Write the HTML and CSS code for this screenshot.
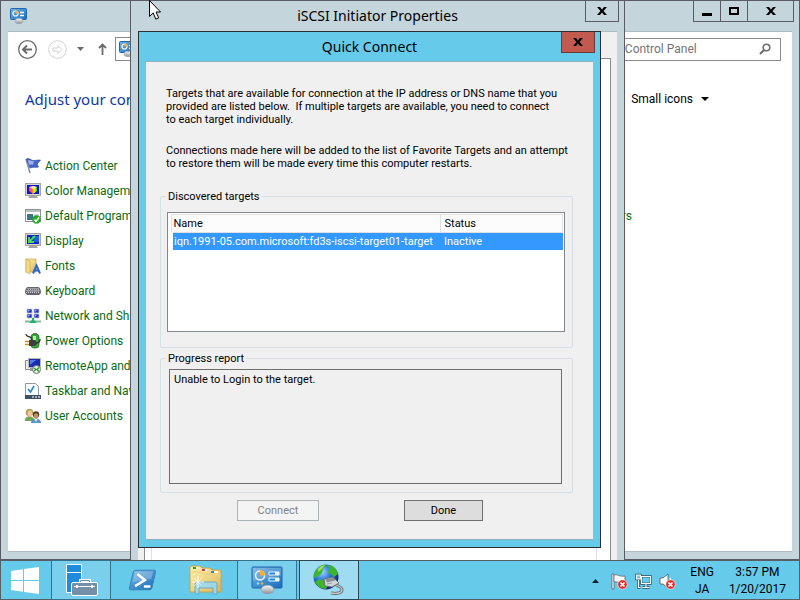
FILE: index.html
```html
<!DOCTYPE html>
<html lang="en">
<head>
<meta charset="utf-8">
<title>Quick Connect</title>
<link rel="stylesheet" href="styles.css">
</head>
<body>
<svg class="defs" aria-hidden="true">
  <defs>
    <linearGradient id="gBlue" x1="0" y1="0" x2="1" y2="1"><stop offset="0" stop-color="#6db4e8"/><stop offset="1" stop-color="#1b6db8"/></linearGradient>
    <linearGradient id="gGrey" x1="0" y1="0" x2="0" y2="1"><stop offset="0" stop-color="#fafafa"/><stop offset="1" stop-color="#8d9299"/></linearGradient>
    <linearGradient id="gFolder" x1="0" y1="0" x2="1" y2="1"><stop offset="0" stop-color="#fdf3b4"/><stop offset="1" stop-color="#dfb758"/></linearGradient>
    <linearGradient id="gRainbow" x1="0" y1="0" x2="1" y2="0"><stop offset="0" stop-color="#ff2fd0"/><stop offset=".35" stop-color="#ff5a2a"/><stop offset=".65" stop-color="#ffee20"/><stop offset="1" stop-color="#18d838"/></linearGradient>
    <radialGradient id="gGlobe" cx=".35" cy=".3" r=".75"><stop offset="0" stop-color="#9fd4ff"/><stop offset=".45" stop-color="#2a78e0"/><stop offset="1" stop-color="#0b2078"/></radialGradient>
    <symbol id="panel" viewBox="0 0 32 28">
      <rect x="1" y="1" width="30" height="21" rx="1" fill="url(#gBlue)" stroke="#1f65a8"/>
      <path d="M2 2h28v8L2 15z" fill="#fff" opacity=".14"/>
      <circle cx="9" cy="9.500" r="4.500" fill="none" stroke="#e8f4ff" stroke-width="1.500"/>
      <path d="M9 9.500V3.500a6 6 0 0 1 5 6z" fill="#ffad33"/>
      <path d="M18 6h10v3H18zM18 12h10v3H18z" fill="#2784d8" stroke="#e8f4ff"/>
      <path d="M24 6h4v3h-4zM24 12h4v3h-4z" fill="#e8f4ff"/>
      <circle cx="7" cy="17.500" r="1.300" fill="#8fe0ff"/><circle cx="11" cy="17.500" r="1.300" fill="#ffad33"/>
      <ellipse cx="16.500" cy="23.500" rx="6.500" ry="4.300" fill="url(#gGrey)" stroke="#8b9096" stroke-width=".5"/>
    </symbol>
    <symbol id="panel-s" viewBox="0 0 17 16">
      <rect x=".5" y=".5" width="16" height="11" rx="1" fill="url(#gBlue)" stroke="#2466a6"/>
      <circle cx="5.500" cy="5.500" r="2.500" fill="none" stroke="#fff" stroke-width="1.200"/>
      <path d="M5.500 5.500V2.500a3 3 0 0 1 3 3z" fill="#ffad33"/>
      <path d="M10 4.500h4M10 7.500h4" stroke="#fff" stroke-width="1.300"/>
      <ellipse cx="9" cy="13" rx="4" ry="2.700" fill="url(#gGrey)" stroke="#999ea4" stroke-width=".5"/>
    </symbol>
  </defs>
</svg>

<div class="screen">
  <main class="desktop">

    <section class="window cpanel" aria-label="Control Panel">
      <header class="titlebar">
        <svg class="title-icon" width="17" height="16"><use href="#panel-s"/></svg>
        <div class="caption-buttons">
          <button class="cap" aria-label="Minimize"><svg width="12" height="10" viewBox="0 0 12 10"><path d="M1 7h10v3H1z"/></svg></button>
          <button class="cap" aria-label="Maximize"><svg width="12" height="10" viewBox="0 0 12 10"><path d="M1 1h10v8H1zM3 3v4h6V3z" fill-rule="evenodd"/></svg></button>
          <button class="cap cap-wide" aria-label="Close"><svg width="10" height="8" viewBox="0 0 10 8"><path d="M0 0h3l2 2.500L7 0h3L6.500 4 10 8H7L5 5.500 3 8H0l3.500-4z"/></svg></button>
        </div>
      </header>
      <div class="cp-body">
        <nav class="cp-nav" aria-label="Navigation">
          <button class="nav-btn" aria-label="Back"><svg width="19" height="19" viewBox="0 0 19 19" fill="none" stroke="#6a6a6a"><circle cx="9.500" cy="9.500" r="8.800" stroke-width="1.300"/><path d="M5 9.500h9M9 5.500l-4 4 4 4" stroke-width="2"/></svg></button>
          <button class="nav-btn nav-fwd" aria-label="Forward" disabled><svg width="19" height="19" viewBox="0 0 19 19" fill="none" stroke="#d2d2d2"><circle cx="9.500" cy="9.500" r="8.800"/><path d="M5 8h5V5.500l4 4-4 4V11H5z"/></svg></button>
          <button class="nav-btn nav-drop" aria-label="Recent locations"><svg width="7" height="4" viewBox="0 0 7 4"><path d="M0 0h7L3.500 4z" fill="#6a6a6a"/></svg></button>
          <button class="nav-btn nav-up" aria-label="Up"><svg width="9" height="12" viewBox="0 0 9 12" fill="none" stroke="#6a6a6a" stroke-width="1.800"><path d="M4.500 12V1.500M1 5l3.500-3.500L8 5"/></svg></button>
          <div class="address"><svg width="17" height="16"><use href="#panel-s"/></svg></div>
          <label class="search">
            <input type="search" placeholder="Search Control Panel" aria-label="Search Control Panel">
            <svg width="12" height="12" viewBox="0 0 12 12" fill="none" stroke="#6d6d6d"><circle cx="7.500" cy="4.500" r="3.300" stroke-width="1.600"/><path d="M5 7L1 11" stroke-width="2.200"/></svg>
          </label>
        </nav>
        <div class="cp-head">
          <h1>Adjust your computer's settings</h1>
          <button class="view-by">Small icons <svg width="8" height="4" viewBox="0 0 8 4"><path d="M0 0h8L4 4z"/></svg></button>
        </div>
        <div class="cp-columns">
          <ul class="cp-list">
            <li><a href="#"><svg width="16" height="16" viewBox="0 0 16 16"><path d="M1 1l4 14" stroke="#7f8cae" stroke-width="1.500"/><path d="M1.500 1c3-1.500 4 1.500 7 1.500s4-.5 7-.5l-3.500 4 1.500 3c-3 1-5-.5-8.500 1z" fill="#4666c8" stroke="#324d9c" stroke-width=".7"/><path d="M3 2.500c3-1 4 1 6 1l-1 3-4 0z" fill="#9db4f0"/></svg>Action Center</a></li>
            <li><a href="#"><svg width="16" height="16" viewBox="0 0 16 16"><path d="M5 12h6l2 3H3z" fill="#a2a2a2"/><rect x=".5" y=".5" width="15" height="12" fill="#d5d5d0" stroke="#a5a5a0"/><rect x="2" y="2" width="12" height="9" fill="#1117c8"/><path d="M4 4l4-1 4 1v4l-4 3-4-3z" fill="url(#gRainbow)"/><path d="M4 4l4-1 4 1-4 2z" fill="#fff" opacity=".7"/></svg>Color Management</a></li>
            <li><a href="#"><svg width="16" height="16" viewBox="0 0 16 16"><rect x=".5" y="1.500" width="15" height="12" fill="#fbfbfb" stroke="#8e9396"/><path d="M1 2h14v2H1z" fill="#b8bec2"/><path d="M2 6h6v6H2z" fill="#3a7588"/><path d="M9 7h5M9 9h4" stroke="#a8b0b4"/><circle cx="11.500" cy="11.500" r="4.300" fill="#28a828"/><path d="M9.500 11.500l1.500 2 3-4" fill="none" stroke="#fff" stroke-width="1.400"/></svg>Default Programs</a></li>
            <li><a href="#"><svg width="16" height="16" viewBox="0 0 16 16"><path d="M5 12h6l2 3H3z" fill="#a2a2a2"/><rect x=".5" y=".5" width="15" height="12" fill="#d5d5d0" stroke="#a5a5a0"/><rect x="2" y="2" width="12" height="9" fill="#1524c0"/><path d="M7 4h7M9 6h5M9 8h5" stroke="#2fa0f0"/><path d="M10 3L5 8m-1-4v5h5" fill="none" stroke="#42e052" stroke-width="1.900"/></svg>Display</a></li>
            <li><a href="#"><svg width="16" height="16" viewBox="0 0 16 16"><path d="M1 1h10v13H1z" fill="url(#gFolder)" stroke="#d0a848" stroke-width=".7"/><path d="M1 1l4 2v13l-4-2z" fill="#f5dc8a" stroke="#c99d3b" stroke-width=".6"/><path d="M8 15.500l3.500-8 3.500 8M9 12.500h5" fill="none" stroke="#2a6ad0" stroke-width="2"/></svg>Fonts</a></li>
            <li><a href="#"><svg width="16" height="16" viewBox="0 0 16 16"><path d="M3 4h10c2 0 3 3 3 6l-2 2H2l-2-2c0-3 1-6 3-6z" fill="#65656f"/><path d="M2.500 5.500h11M1.500 7.500h13M1 9.500h14" stroke="#d4d4dc" stroke-dasharray="1 1"/><path d="M1.500 8.500h13M2 6.500h12" stroke="#b4b4be" stroke-dasharray="1 1" stroke-dashoffset="1"/></svg>Keyboard</a></li>
            <li><a href="#"><svg width="16" height="16" viewBox="0 0 16 16"><path d="M2 1h5v4H2zM9 1h5v4H9zM2 6h5v4H2zM9 6h5v4H9z" fill="#2434bd" stroke="#bcc3dc" stroke-width=".8"/><path d="M3 2l2 0-2 2zM10 2h2l-2 2zM3 7h2l-2 2zM10 7h2l-2 2z" fill="#8ca4ff"/><path d="M0 13.500h16" stroke="#8db4a0" stroke-width="2"/><path d="M7 10h2v2l3 3H4l3-3z" fill="#20b070"/></svg>Network and Sharing Center</a></li>
            <li><a href="#"><svg width="16" height="16" viewBox="0 0 16 16"><rect x="6" y="1" width="8" height="14" rx="3" fill="#39a83e" stroke="#1d6425" stroke-width=".7"/><path d="M8 1h4V0H8z" fill="#777"/><path d="M8 3h3v4H8z" fill="#b6efae"/><path d="M1 1c0 4 6 1 6 6" fill="none" stroke="#333" stroke-width="1.200"/><path d="M4 7h5c3 0 4 6 0 6H4z" fill="#3e3e3e"/><path d="M0 8.500h4M0 11.500h4" stroke="#c9902a" stroke-width="1.300"/><path d="M11 10c3 0 4-2 4-4" fill="none" stroke="#333" stroke-width="1.400"/></svg>Power Options</a></li>
            <li><a href="#"><svg width="16" height="16" viewBox="0 0 16 16"><path d="M.5 2.500h5v9h-5z" fill="#f0f0f0" stroke="#8a8a8a"/><rect x="3.500" y=".5" width="12" height="9" fill="#1a2bb4" stroke="#b8b8b8"/><path d="M5 2h6L5 7z" fill="#5a78ee"/><path d="M5 10h6v3H5z" fill="#9a9a9a"/><circle cx="11.500" cy="11.500" r="4" fill="#e4eee4" stroke="#777"/><path d="M9 10l2 1.500L9 13M14 9.500L12 11.500l2 2" fill="none" stroke="#27922f" stroke-width="1.200"/></svg>RemoteApp and Desktop Connections</a></li>
            <li><a href="#"><svg width="16" height="16" viewBox="0 0 16 16"><path d="M.5.500h10l3 3v9H.5z" fill="#fafcff" stroke="#8f979f"/><path d="M3 6l2.500 3L9 3" fill="none" stroke="#2788d8" stroke-width="1.600"/><path d="M0 12h16v4H0z" fill="#3f5063"/><path d="M7 14h2M10 14h2M13 14h2" stroke="#c3ccd6" stroke-width="1.500"/></svg>Taskbar and Navigation</a></li>
            <li><a href="#"><svg width="16" height="16" viewBox="0 0 16 16"><path d="M0 12c0-5 9-5 9 0v1H0z" fill="#73a653"/><circle cx="4.500" cy="4.500" r="3.800" fill="#b8a060"/><ellipse cx="5" cy="5.500" rx="2.400" ry="3" fill="#f0c898"/><path d="M6 15c0-6 10-6 10 0z" fill="#5c94c8"/><path d="M9.500 11l1.500 3 1.500-3z" fill="#fff"/><circle cx="11" cy="6.500" r="3.200" fill="#4e3b30"/><ellipse cx="11" cy="8" rx="2.200" ry="2.700" fill="#c98e5c"/></svg>User Accounts</a></li>
          </ul>
          <ul class="cp-list cp-list-right">
            <li><a href="#">Devices and Printers</a></li>
            <li><a href="#">Phone and Modem</a></li>
          </ul>
        </div>
      </div>
    </section>

    <section class="window props" aria-label="iSCSI Initiator Properties">
      <header class="titlebar">
        <h2>iSCSI Initiator Properties</h2>
        <button class="cap cap-close" aria-label="Close"><svg width="10" height="8" viewBox="0 0 10 8"><path d="M0 0h3l2 2.500L7 0h3L6.500 4 10 8H7L5 5.500 3 8H0l3.500-4z"/></svg></button>
      </header>
      <div class="props-body"><div class="tab-page"><div class="tab-group"></div></div></div>
    </section>

    <section class="window quick" role="dialog" aria-labelledby="quick-title">
      <header class="titlebar">
        <h2 id="quick-title">Quick Connect</h2>
        <button class="cap cap-red" aria-label="Close"><svg width="10" height="8" viewBox="0 0 10 8"><path d="M0 0h3l2 2.500L7 0h3L6.500 4 10 8H7L5 5.500 3 8H0l3.500-4z"/></svg></button>
      </header>
      <form class="quick-body">
        <p>Targets that are available for connection at the IP address or DNS name that you<br>provided are listed below.&nbsp; If multiple targets are available, you need to connect<br>to each target individually.</p>
        <p>Connections made here will be added to the list of Favorite Targets and an attempt<br>to restore them will be made every time this computer restarts.</p>
        <fieldset>
          <legend>Discovered targets</legend>
          <div class="list-view">
            <table>
              <thead><tr><th class="col-name">Name</th><th>Status</th></tr></thead>
              <tbody><tr><td>iqn.1991-05.com.microsoft:fd3s-iscsi-target01-target</td><td>Inactive</td></tr></tbody>
            </table>
          </div>
        </fieldset>
        <fieldset>
          <legend id="report-label">Progress report</legend>
          <textarea readonly aria-labelledby="report-label">Unable to Login to the target.</textarea>
        </fieldset>
        <div class="actions">
          <button type="button" class="btn btn-connect" disabled>Connect</button>
          <button type="button" class="btn">Done</button>
        </div>
      </form>
    </section>

    <svg class="cursor" width="12" height="21" viewBox="0 0 12 21"><path d="M.5.500v16l3.700-3.600 2.600 6.200 2.900-1.200L7 12h4.500z" fill="#fff" stroke="#000"/></svg>
  </main>

  <footer class="taskbar">
    <button class="start" aria-label="Start"><svg width="28" height="27" viewBox="0 0 28 27" fill="#fff"><path d="M0 4l12-1.700V13H0zM13 2.100L28 0v13H13zM0 14h12v10.700L0 23zM13 14h15v13l-15-2.100z"/></svg></button>
    <div class="tasks">
      <button class="task task-open" aria-label="Server Manager"><svg width="33" height="33" viewBox="0 0 33 33"><path d="M1.500.500h15v28h-15z" fill="#1e8bdc" stroke="#fff"/><path d="M1.500 8.500h15" stroke="#fff"/><path d="M15.500 19v-2.500h9V19" fill="none" stroke="#fff" stroke-width="3"/><path d="M15.500 19v-2.500h9V19" fill="none" stroke="#71889b"/><rect x="6.500" y="18.500" width="26" height="13" rx="1.500" fill="#748fa6" stroke="#fff"/><path d="M9 22.500h21" stroke="#fff"/><path d="M11 21h2v3h-2zM26 21h2v3h-2z" fill="#fff"/></svg></button>
      <button class="task" aria-label="Windows PowerShell"><svg width="28" height="23" viewBox="0 0 30 24"><path d="M7 1h20q2 0 1.500 2l-4 17q-.5 2-2.500 2H2q-2 0-1.500-2l4-17Q5 1 7 1z" fill="url(#gBlue)" stroke="#3a7fb5"/><path d="M6 2h20l-2 8L4 14z" fill="#fff" opacity=".25"/><path d="M9 5l8 6.500L6.500 18M16 18.500h7" fill="none" stroke="#fff" stroke-width="2.600"/></svg></button>
      <button class="task" aria-label="File Explorer"><svg width="33" height="30" viewBox="0 0 33 30"><path d="M1 26V3q0-2 2-2h8l2 2h8l2 2h8q1 0 1 2v20H1z" fill="url(#gFolder)" stroke="#c6a14a"/><path d="M4 2h5v2H4zM13 4h5v2h-5zM22 6h7v2h-7z" fill="#fff"/><path d="M4 2h3v2H4z" fill="#0ab515"/><path d="M13 4h3v2h-3z" fill="#d63a30"/><path d="M22 6h3v2h-3z" fill="#2a8ce0"/><path d="M1 7h11l2 2h9l2 2h7" fill="none" stroke="#ecd07c"/><path d="M6 29V19q0-2 2-2h18q2 0 2 2v10h-4v-6H10v6z" fill="#9dd8ee" stroke="#60a8c8" opacity=".92"/><path d="M9 11v12M3 17h12" stroke="#fff" stroke-width=".9"/><path d="M5 13l8 8M13 13l-8 8" stroke="#fff" stroke-width=".6"/></svg></button>
      <button class="task task-open" aria-label="Control Panel"><svg width="32" height="28"><use href="#panel"/></svg></button>
      <button class="task task-active" aria-label="iSCSI Initiator"><svg width="32" height="32" viewBox="0 0 32 32"><circle cx="13" cy="13" r="12.500" fill="url(#gGlobe)"/><path d="M3 6c4-5 8-6 10-5l-3 4-1 4-4 3-4 2c0-3 0-6 2-8zM15 1c5 0 9 4 10 9l-4 3-3-3-3-1 1-4zM6 15l6 2 3 4-2 4c-5 0-9-3-11-7z" fill="#3fb52c"/><path d="M5 5c3-3 5-4 7-4L9 5 5 8z" fill="#b5ea6a" opacity=".8"/><path d="M22 20c3 2 7 3 7 6s-5 4-11 3" fill="none" stroke="#5f666c" stroke-width="3"/><path d="M22 20c3 2 7 3 7 6s-5 4-11 3" fill="none" stroke="#c5ccd1" stroke-width="1.300"/><path d="M11 15l9-2 6 6-7 4-7-1z" fill="#d3d6d9" stroke="#5d6267" stroke-width=".8"/><path d="M13 15.500l7-1.500 2 2-8 2zM14 20l5-1" fill="#8d949a" stroke="#777" stroke-width=".6"/></svg></button>
    </div>
    <div class="tray">
      <button class="tray-btn" aria-label="Show hidden icons"><svg width="7" height="4" viewBox="0 0 7 4"><path d="M0 4h7L3.500 0z" fill="#122"/></svg></button>
      <button class="tray-btn" aria-label="Action Center"><svg width="17" height="17" viewBox="0 0 17 17"><path d="M1 1h2v15H1z" fill="#fff" stroke="#456" stroke-width=".7"/><path d="M3 2c4-1 5 2 11 1v7c-6 1-7-2-11-1z" fill="#fff" stroke="#567" stroke-width=".8"/><circle cx="11.500" cy="11.500" r="4.700" fill="#e02a24" stroke="#fff" stroke-width=".6"/><path d="M9.500 9.500l4 4M13.500 9.500l-4 4" stroke="#fff" stroke-width="1.700"/></svg></button>
      <button class="tray-btn" aria-label="Network"><svg width="17" height="17" viewBox="0 0 17 17" fill="none"><path d="M6.500 3.500h9v7h-9zM11 11v3M7.500 14.500h7M3.500 7v7.500h2" stroke="#285060" stroke-width="2.600"/><path d="M1.500 2h4v4h-4z" fill="#66caea" stroke="#285060" stroke-width="2.600"/><path d="M6.500 3.500h9v7h-9zM11 11v3M7.500 14.500h7M3.500 7v7.500h2" stroke="#fff" stroke-width="1.200"/><path d="M7.500 4.500h7v5h-7z" fill="#66caea"/><path d="M1.500 2h4v4h-4z" fill="#66caea" stroke="#fff" stroke-width="1.200"/></svg></button>
      <button class="tray-btn" aria-label="Volume"><svg width="17" height="17" viewBox="0 0 17 17"><path d="M1 5h3l5-4v14l-5-4H1z" fill="#fff" stroke="#456" stroke-width=".8"/><path d="M11 5c1 2 1 4 0 6" fill="none" stroke="#fff" stroke-width="1.300"/><circle cx="11.500" cy="11.500" r="4.700" fill="#e02a24" stroke="#fff" stroke-width=".6"/><path d="M9.500 9.500l4 4M13.500 9.500l-4 4" stroke="#fff" stroke-width="1.700"/></svg></button>
      <div class="lang">ENG<br>JA</div>
      <time class="clock" datetime="2017-01-20T15:57">3:57 PM<br>1/20/2017</time>
    </div>
  </footer>
</div>
</body>
</html>
```
FILE: styles.css
```css
* { box-sizing: border-box; }

body {
  margin: 0;
  background: #c4d5dc;
  color: #000;
  font: 12px/16px Roboto, "Open Sans", sans-serif;
}

h1, h2, p, ul, fieldset { margin: 0; padding: 0; }
h1, h2 { font-family: "Noto Sans", sans-serif; font-weight: 400; }
button, input, textarea { font: inherit; color: inherit; }
button { padding: 0; border: 0; background: none; }
svg { display: block; flex: none; }
.defs { position: absolute; width: 0; height: 0; }

.screen {
  display: grid;
  grid-template-rows: minmax(0, 1fr) 40px;
  height: 100vh;
}

.desktop { position: relative; overflow: hidden; }

/* Windows */
.window {
  position: absolute;
  display: flex;
  flex-direction: column;
  border: 1px solid #5b5b66;
  background: #c4d5dc;
}

.titlebar {
  position: relative;
  display: flex;
  align-items: center;
  flex: none;
  height: 30px;
  padding: 0 7px;
}

.titlebar h2 { flex: 1; text-align: center; font-size: 14px; line-height: 28px; }
.title-icon { margin-left: 2px; }

.cap {
  display: grid;
  place-items: center;
  width: 28px;
  height: 21px;
  border: 1px solid #5b5b66;
  border-top: 0;
}

.caption-buttons { display: flex; align-self: flex-start; margin-left: auto; margin-right: -2px; }
.caption-buttons .cap + .cap { margin-left: -1px; }
.cap-wide { width: 47px; }
.cap-close, .cap-red { position: absolute; top: 0; right: 5px; width: 34px; }
.cap-red { background: #c35a50; border-color: #6b3a3a; }

/* Control Panel */
.cpanel { inset: 0; }

.cp-body {
  flex: 1;
  min-height: 0;
  margin: 0 7px 7px;
  border-top: 1px solid #aebcc4;
  border-bottom: 1px solid #aebcc4;
  background: #fff;
}

.cp-nav { display: flex; align-items: center; padding: 5px 11px 0 10px; }
.nav-fwd { margin-left: 11px; }
.nav-drop { margin-left: 10px; }
.nav-up { margin-left: 14px; }

.address {
  display: flex;
  align-items: center;
  flex: 1;
  height: 24px;
  margin: 0 8px;
  padding-left: 3px;
  border: 1px solid #8a8a8a;
}

.search {
  display: flex;
  align-items: center;
  width: 200px;
  height: 23px;
  padding: 0 9px 0 3px;
  border: 1px solid #8a8a8a;
}

.search input { flex: 1; min-width: 0; padding: 0; border: 0; outline: 0; background: none; }
.search input::placeholder { color: #757575; opacity: 1; }

.cp-head { display: flex; align-items: center; justify-content: space-between; padding: 26px 83px 0 17px; }
.cp-head h1 { color: #0c3aa5; font-size: 15px; line-height: 24px; }
.view-by { display: flex; align-items: center; gap: 8px; }

.cp-columns { display: flex; justify-content: space-between; padding: 42px 160px 0 17px; }
.cp-list { list-style: none; }
.cp-list a { display: flex; align-items: center; gap: 4px; height: 25px; color: #0b6b12; text-decoration: none; }
.cp-list-right { display: grid; align-content: start; gap: 75px; padding-top: 50px; }

/* iSCSI Initiator Properties */
.props { top: 0; bottom: -40px; left: 130px; width: 495px; }
.props-body { flex: 1; display: flex; margin: 0 7px; padding: 26px 6px 0; border-top: 1px solid #aebcc4; background: #f0f0f0; }
.tab-page { flex: 1; display: flex; padding: 0 13px 0 6px; border: 1px solid #8a8a92; background: #fff; }
.tab-group { flex: 1; border: solid #d9e1e6; border-width: 0 1px; }

/* Quick Connect */
.quick { top: 31px; left: 138px; width: 463px; border-color: #2b2f33; background: #66caea; }
.quick .titlebar { height: 29px; }

.quick-body {
  margin: 0 7px 7px;
  padding: 25px 20px 18px 14px;
  border-top: 1px solid #8fb0be;
  border-bottom: 1px solid #8fb0be;
  background: #f0f0f0;
  font: 11px/13px Roboto, "Liberation Sans", sans-serif;
}

.quick-body p { padding-left: 6px; margin-bottom: 18px; white-space: nowrap; }
.quick-body p + p { margin-bottom: 20px; }

fieldset { min-width: 0; padding: 9px 7px 15px 6px; border: 1px solid #d5dfe5; border-radius: 2px; }
fieldset + fieldset { margin-top: 4px; padding: 4px 10px 8px 8px; }
legend { padding: 0 2px; margin-left: -1px; }
fieldset + fieldset legend { margin-left: -3px; }

.list-view { height: 120px; padding: 1px; border: 1px solid #828790; background: #fff; }
.list-view table { width: 100%; border-collapse: collapse; }
.list-view th, .list-view td { padding: 0 4px; text-align: left; font-weight: 400; white-space: nowrap; }
.list-view th { height: 18px; border: 1px solid #e0e0e0; background: #fcfcfc; }
.list-view td { height: 17px; background: #3399ff; color: #fff; }
.list-view th:first-child { padding-left: 2px; }
.list-view td:first-child { padding-left: 1px; border-left: 4px solid #fff; }
.col-name { width: 269px; }

textarea {
  display: block;
  width: 100%;
  height: 115px;
  padding: 3px 4px;
  border: 1px solid #6d6d6d;
  outline: 0;
  background: #f0f0f0;
  resize: none;
}

.actions { display: flex; justify-content: flex-end; gap: 85px; margin-top: 7px; padding-right: 90px; }
.btn { width: 79px; height: 21px; border: 1px solid #707070; background: #ddd; }
.btn-connect { width: 82px; border-color: #adb2b5; background: #f4f4f4; color: #838383; }

.cursor { position: absolute; left: 149px; top: 0; }

/* Taskbar */
.taskbar {
  position: relative;
  display: flex;
  align-items: stretch;
  border: 1px solid #5a5f63;
  background: #66caea;
}

.start { display: grid; place-items: center; width: 50px; padding-right: 2px; }
.tasks { display: flex; gap: 2px; margin: -1px 0; }
.task { display: grid; place-items: center; width: 60px; border: 1px solid transparent; }
.task-open { border-color: #34718a; background: #7ad0ec; }
.task-active { border-color: #2b4653; background: #a0dcf1; }

.tray { display: flex; align-items: center; margin-left: auto; padding: 2px 13px 0 0; gap: 7px; }
.tray-btn:first-child { margin-right: 5px; }
.lang, .clock { line-height: 17px; text-align: center; }
.lang { margin-left: 7px; }
.clock { margin-left: 8px; }
```
